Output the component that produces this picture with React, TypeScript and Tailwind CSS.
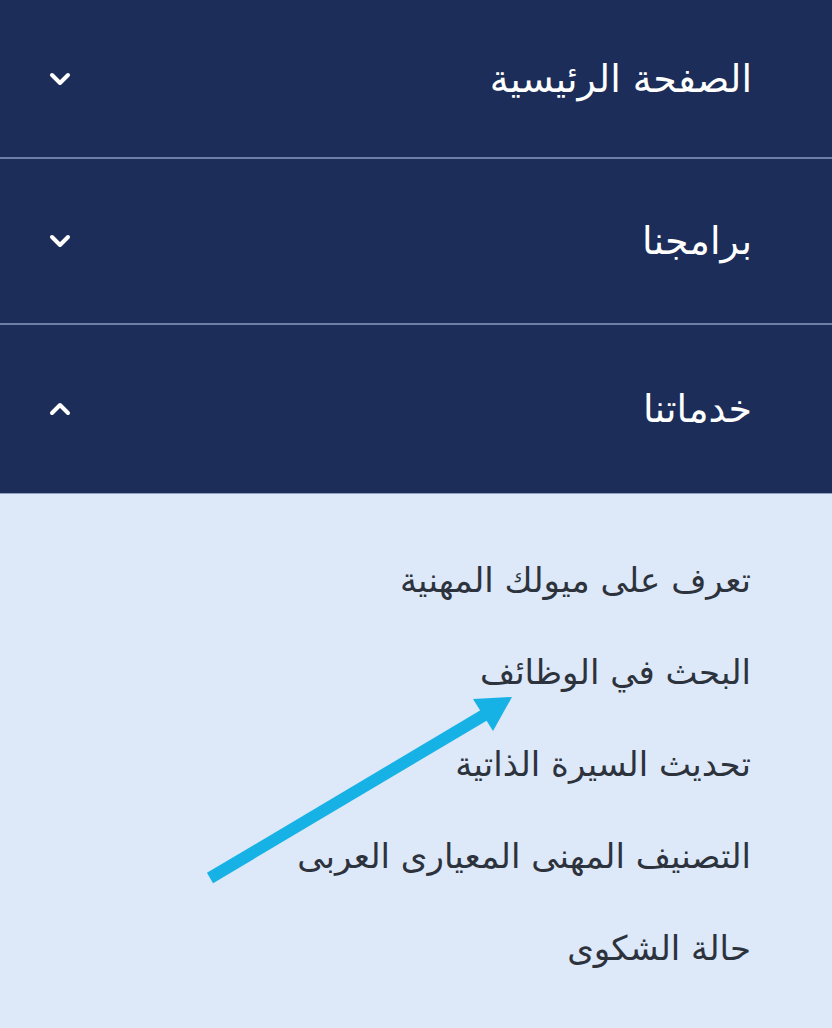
import React from "react";

const mainItems = [
  { title: "الصفحة الرئيسية", open: false, h: "h-[159px]" },
  { title: "برامجنا", open: false, h: "h-[166px]" },
  { title: "خدماتنا", open: true, h: "h-[168px]" },
];

const subItems = [
  "تعرف على ميولك المهنية",
  "البحث في الوظائف",
  "تحديث السيرة الذاتية",
  "التصنيف المهنى المعيارى العربى",
  "حالة الشكوى",
];

const Chevron = ({ up }: { up: boolean }) => (
  <svg width="22" height="14" viewBox="0 0 22 14" className="text-white">
    <path
      d={up ? "M3 11 L11 3 L19 11" : "M3 3 L11 11 L19 3"}
      fill="none"
      stroke="currentColor"
      strokeWidth="4"
      strokeLinecap="round"
      strokeLinejoin="round"
    />
  </svg>
);

const App = () => {
  return (
    <div
      dir="rtl"
      className="relative w-[832px] h-[1028px] overflow-hidden bg-[#dde8f8]"
      style={{ fontFamily: '"DejaVu Sans", "Noto Sans", sans-serif' }}
    >
      <div className="bg-[#1b2d58]">
        {mainItems.map((item, i) => (
          <div
            key={item.title}
            className={`flex items-center justify-between pr-[80px] pl-[49px] ${item.h} ${
              i < mainItems.length - 1 ? "border-b-2 border-[#6e7ea6]" : ""
            }`}
          >
            <span className="text-[38px] text-white leading-none">{item.title}</span>
            <Chevron up={item.open} />
          </div>
        ))}
      </div>
      <div className="border-t border-[#8fa0c2] pt-[40px] pr-[81px]">
        {subItems.map((s) => (
          <div key={s} className="h-[92px] flex items-center">
            <span className="text-[34px] text-[#2d333d] leading-none">{s}</span>
          </div>
        ))}
      </div>
      <svg
        className="absolute left-0 top-0 pointer-events-none"
        width="832"
        height="1028"
        viewBox="0 0 832 1028"
      >
        <line x1="210" y1="878" x2="486" y2="714" stroke="#16b2e6" strokeWidth="12" />
        <polygon points="473,699 512,697 493,731" fill="#16b2e6" />
      </svg>
    </div>
  );
};

export default App;
